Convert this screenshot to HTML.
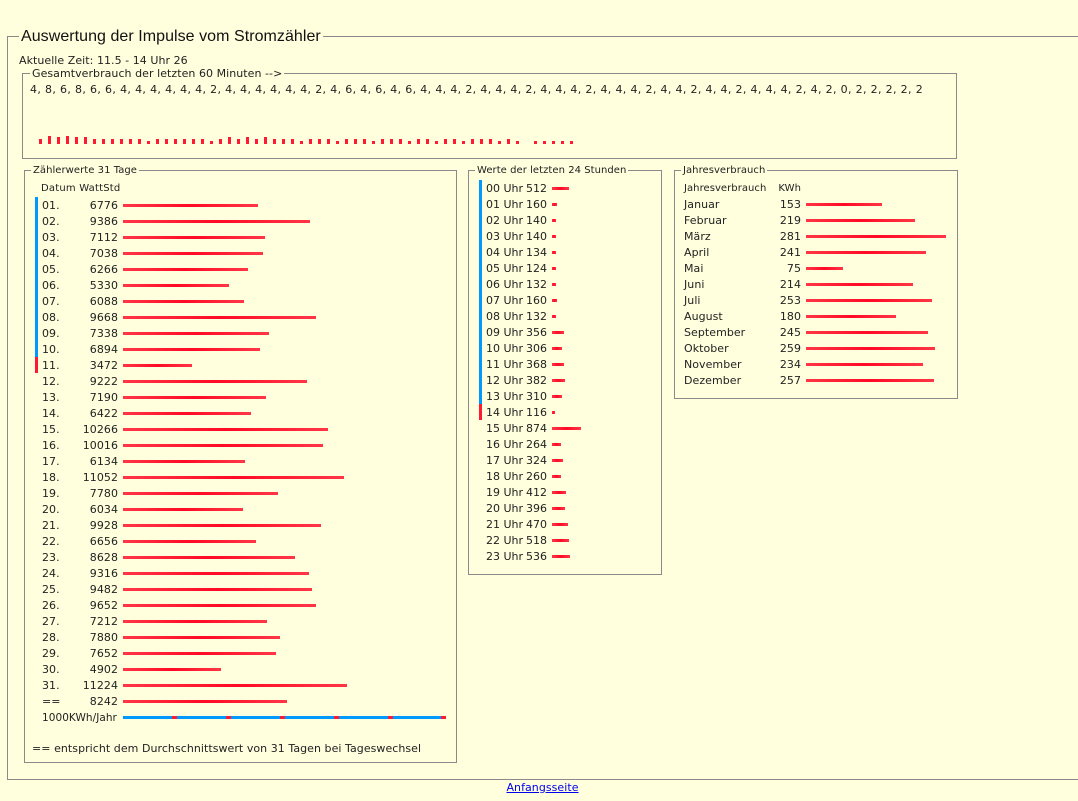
<!DOCTYPE html>
<html><head><meta charset="utf-8">
<style>
body{margin:0;width:1078px;height:801px;background:#ffffdd;font-family:"DejaVu Sans",Verdana,sans-serif;font-size:11px;color:#222;position:relative;overflow:hidden;letter-spacing:0.05px}
.fs{position:absolute;border:1px solid #8a8a8a;box-sizing:border-box}
.lg{position:absolute;background:#ffffdd;padding:0 2px;white-space:nowrap;line-height:14px}
.t{position:absolute;white-space:nowrap;line-height:16px}
.r{position:absolute;height:16px;line-height:16px;white-space:nowrap;left:0;width:1000px}
.r span{position:absolute;top:1px}
.r i{position:absolute;top:7px;height:3px;background:linear-gradient(to right,#ff3546,#ff0a26 50%,#ff3546)}
.d .a{left:42px}.d .b{left:60px;width:58px;text-align:right}.d i{left:123px}
.h .a{left:486px;letter-spacing:0}.h .b{left:515px;width:32px;text-align:right;letter-spacing:0}.h i{left:552px}
.m .a{left:684px}.m .b{left:765px;width:36px;text-align:right}.m i{left:806px}
#bars{position:absolute;left:39px;top:128px;height:16px;display:flex;align-items:flex-end}
#bars b{display:block;width:3px;margin-right:6px;background:#ff1a33}
</style></head><body>

<div class="fs" style="left:7px;top:36px;width:1072px;height:744px"></div>
<div class="lg" style="left:19px;top:28px;font-family:'Liberation Sans',sans-serif;font-size:16px;line-height:18px;color:#111">Auswertung der Impulse vom Stromzähler</div>
<div class="t" style="left:19px;top:53px">Aktuelle Zeit: 11.5 - 14 Uhr 26</div>

<div class="fs" style="left:22px;top:73px;width:935px;height:86px"></div>
<div class="lg" style="left:30px;top:67px">Gesamtverbrauch der letzten 60 Minuten --&gt;</div>
<div class="t" style="left:30px;top:82px;letter-spacing:0.34px">4, 8, 6, 8, 6, 6, 4, 4, 4, 4, 4, 4, 2, 4, 4, 4, 4, 4, 4, 2, 4, 6, 4, 6, 4, 6, 4, 4, 4, 2, 4, 4, 4, 2, 4, 4, 4, 2, 4, 4, 4, 2, 4, 4, 2, 4, 4, 2, 4, 4, 4, 2, 4, 2, 0, 2, 2, 2, 2, 2</div>
<div id="bars">
<b style="height:5px"></b><b style="height:8px"></b><b style="height:7px"></b><b style="height:8px"></b><b style="height:7px"></b><b style="height:7px"></b><b style="height:5px"></b><b style="height:5px"></b><b style="height:5px"></b><b style="height:5px"></b><b style="height:5px"></b><b style="height:5px"></b><b style="height:3px"></b><b style="height:5px"></b><b style="height:5px"></b><b style="height:5px"></b><b style="height:5px"></b><b style="height:5px"></b><b style="height:5px"></b><b style="height:3px"></b><b style="height:5px"></b><b style="height:7px"></b><b style="height:5px"></b><b style="height:7px"></b><b style="height:5px"></b><b style="height:7px"></b><b style="height:5px"></b><b style="height:5px"></b><b style="height:5px"></b><b style="height:3px"></b><b style="height:5px"></b><b style="height:5px"></b><b style="height:5px"></b><b style="height:3px"></b><b style="height:5px"></b><b style="height:5px"></b><b style="height:5px"></b><b style="height:3px"></b><b style="height:5px"></b><b style="height:5px"></b><b style="height:5px"></b><b style="height:3px"></b><b style="height:5px"></b><b style="height:5px"></b><b style="height:3px"></b><b style="height:5px"></b><b style="height:5px"></b><b style="height:3px"></b><b style="height:5px"></b><b style="height:5px"></b><b style="height:5px"></b><b style="height:3px"></b><b style="height:5px"></b><b style="height:3px"></b><b style="height:0px"></b><b style="height:3px"></b><b style="height:3px"></b><b style="height:3px"></b><b style="height:3px"></b><b style="height:3px"></b>
</div>

<!-- 31 Tage -->
<div class="fs" style="left:24px;top:170px;width:433px;height:593px"></div>
<div class="lg" style="left:31px;top:164px;font-size:10px">Zählerwerte 31 Tage</div>
<div class="t" style="left:41px;top:181px;font-size:10px;letter-spacing:0.2px">Datum&nbsp;WattStd</div>
<div style="position:absolute;left:35px;top:197px;width:3px;height:160px;background:#0099ff"></div>
<div style="position:absolute;left:35px;top:357px;width:3px;height:16px;background:#ff1a33"></div>
<div class="r d" style="top:197px"><span class="a">01.</span><span class="b">6776</span><i style="width:135px"></i></div>
<div class="r d" style="top:213px"><span class="a">02.</span><span class="b">9386</span><i style="width:187px"></i></div>
<div class="r d" style="top:229px"><span class="a">03.</span><span class="b">7112</span><i style="width:142px"></i></div>
<div class="r d" style="top:245px"><span class="a">04.</span><span class="b">7038</span><i style="width:140px"></i></div>
<div class="r d" style="top:261px"><span class="a">05.</span><span class="b">6266</span><i style="width:125px"></i></div>
<div class="r d" style="top:277px"><span class="a">06.</span><span class="b">5330</span><i style="width:106px"></i></div>
<div class="r d" style="top:293px"><span class="a">07.</span><span class="b">6088</span><i style="width:121px"></i></div>
<div class="r d" style="top:309px"><span class="a">08.</span><span class="b">9668</span><i style="width:193px"></i></div>
<div class="r d" style="top:325px"><span class="a">09.</span><span class="b">7338</span><i style="width:146px"></i></div>
<div class="r d" style="top:341px"><span class="a">10.</span><span class="b">6894</span><i style="width:137px"></i></div>
<div class="r d" style="top:357px"><span class="a">11.</span><span class="b">3472</span><i style="width:69px"></i></div>
<div class="r d" style="top:373px"><span class="a">12.</span><span class="b">9222</span><i style="width:184px"></i></div>
<div class="r d" style="top:389px"><span class="a">13.</span><span class="b">7190</span><i style="width:143px"></i></div>
<div class="r d" style="top:405px"><span class="a">14.</span><span class="b">6422</span><i style="width:128px"></i></div>
<div class="r d" style="top:421px"><span class="a">15.</span><span class="b">10266</span><i style="width:205px"></i></div>
<div class="r d" style="top:437px"><span class="a">16.</span><span class="b">10016</span><i style="width:200px"></i></div>
<div class="r d" style="top:453px"><span class="a">17.</span><span class="b">6134</span><i style="width:122px"></i></div>
<div class="r d" style="top:469px"><span class="a">18.</span><span class="b">11052</span><i style="width:221px"></i></div>
<div class="r d" style="top:485px"><span class="a">19.</span><span class="b">7780</span><i style="width:155px"></i></div>
<div class="r d" style="top:501px"><span class="a">20.</span><span class="b">6034</span><i style="width:120px"></i></div>
<div class="r d" style="top:517px"><span class="a">21.</span><span class="b">9928</span><i style="width:198px"></i></div>
<div class="r d" style="top:533px"><span class="a">22.</span><span class="b">6656</span><i style="width:133px"></i></div>
<div class="r d" style="top:549px"><span class="a">23.</span><span class="b">8628</span><i style="width:172px"></i></div>
<div class="r d" style="top:565px"><span class="a">24.</span><span class="b">9316</span><i style="width:186px"></i></div>
<div class="r d" style="top:581px"><span class="a">25.</span><span class="b">9482</span><i style="width:189px"></i></div>
<div class="r d" style="top:597px"><span class="a">26.</span><span class="b">9652</span><i style="width:193px"></i></div>
<div class="r d" style="top:613px"><span class="a">27.</span><span class="b">7212</span><i style="width:144px"></i></div>
<div class="r d" style="top:629px"><span class="a">28.</span><span class="b">7880</span><i style="width:157px"></i></div>
<div class="r d" style="top:645px"><span class="a">29.</span><span class="b">7652</span><i style="width:153px"></i></div>
<div class="r d" style="top:661px"><span class="a">30.</span><span class="b">4902</span><i style="width:98px"></i></div>
<div class="r d" style="top:677px"><span class="a">31.</span><span class="b">11224</span><i style="width:224px"></i></div>
<div class="r d" style="top:693px"><span class="a">==</span><span class="b">8242</span><i style="width:164px"></i></div>
<div class="r d" style="top:709px;font-size:10.5px"><span class="a">1000KWh/Jahr</span></div>
<div style="position:absolute;left:123px;top:716px;width:323px;height:3px;background:#0099ff"></div>
<div style="position:absolute;left:172px;top:716px;width:5px;height:3px;background:#ff1a33"></div>
<div style="position:absolute;left:226px;top:716px;width:5px;height:3px;background:#ff1a33"></div>
<div style="position:absolute;left:280px;top:716px;width:5px;height:3px;background:#ff1a33"></div>
<div style="position:absolute;left:334px;top:716px;width:5px;height:3px;background:#ff1a33"></div>
<div style="position:absolute;left:388px;top:716px;width:5px;height:3px;background:#ff1a33"></div>
<div style="position:absolute;left:441px;top:716px;width:5px;height:3px;background:#ff1a33"></div>
<div class="t" style="left:32px;top:741px">== entspricht dem Durchschnittswert von 31 Tagen bei Tageswechsel</div>

<!-- 24 Stunden -->
<div class="fs" style="left:468px;top:170px;width:194px;height:405px"></div>
<div class="lg" style="left:475px;top:164px;font-size:10px">Werte der letzten 24 Stunden</div>
<div style="position:absolute;left:479px;top:180px;width:3px;height:224px;background:#0099ff"></div>
<div style="position:absolute;left:479px;top:404px;width:3px;height:16px;background:#ff1a33"></div>
<div class="r h" style="top:180px"><span class="a">00 Uhr</span><span class="b">512</span><i style="width:17px"></i></div>
<div class="r h" style="top:196px"><span class="a">01 Uhr</span><span class="b">160</span><i style="width:5px"></i></div>
<div class="r h" style="top:212px"><span class="a">02 Uhr</span><span class="b">140</span><i style="width:4px"></i></div>
<div class="r h" style="top:228px"><span class="a">03 Uhr</span><span class="b">140</span><i style="width:4px"></i></div>
<div class="r h" style="top:244px"><span class="a">04 Uhr</span><span class="b">134</span><i style="width:4px"></i></div>
<div class="r h" style="top:260px"><span class="a">05 Uhr</span><span class="b">124</span><i style="width:4px"></i></div>
<div class="r h" style="top:276px"><span class="a">06 Uhr</span><span class="b">132</span><i style="width:4px"></i></div>
<div class="r h" style="top:292px"><span class="a">07 Uhr</span><span class="b">160</span><i style="width:5px"></i></div>
<div class="r h" style="top:308px"><span class="a">08 Uhr</span><span class="b">132</span><i style="width:4px"></i></div>
<div class="r h" style="top:324px"><span class="a">09 Uhr</span><span class="b">356</span><i style="width:12px"></i></div>
<div class="r h" style="top:340px"><span class="a">10 Uhr</span><span class="b">306</span><i style="width:10px"></i></div>
<div class="r h" style="top:356px"><span class="a">11 Uhr</span><span class="b">368</span><i style="width:12px"></i></div>
<div class="r h" style="top:372px"><span class="a">12 Uhr</span><span class="b">382</span><i style="width:13px"></i></div>
<div class="r h" style="top:388px"><span class="a">13 Uhr</span><span class="b">310</span><i style="width:10px"></i></div>
<div class="r h" style="top:404px"><span class="a">14 Uhr</span><span class="b">116</span><i style="width:3px"></i></div>
<div class="r h" style="top:420px"><span class="a">15 Uhr</span><span class="b">874</span><i style="width:29px"></i></div>
<div class="r h" style="top:436px"><span class="a">16 Uhr</span><span class="b">264</span><i style="width:9px"></i></div>
<div class="r h" style="top:452px"><span class="a">17 Uhr</span><span class="b">324</span><i style="width:11px"></i></div>
<div class="r h" style="top:468px"><span class="a">18 Uhr</span><span class="b">260</span><i style="width:9px"></i></div>
<div class="r h" style="top:484px"><span class="a">19 Uhr</span><span class="b">412</span><i style="width:14px"></i></div>
<div class="r h" style="top:500px"><span class="a">20 Uhr</span><span class="b">396</span><i style="width:13px"></i></div>
<div class="r h" style="top:516px"><span class="a">21 Uhr</span><span class="b">470</span><i style="width:16px"></i></div>
<div class="r h" style="top:532px"><span class="a">22 Uhr</span><span class="b">518</span><i style="width:17px"></i></div>
<div class="r h" style="top:548px"><span class="a">23 Uhr</span><span class="b">536</span><i style="width:18px"></i></div>

<!-- Jahresverbrauch -->
<div class="fs" style="left:674px;top:170px;width:284px;height:229px"></div>
<div class="lg" style="left:681px;top:164px;font-size:10px">Jahresverbrauch</div>
<div class="r m" style="top:180px;font-size:10px"><span class="a">Jahresverbrauch</span><span class="b">KWh</span></div>
<div class="r m" style="top:196px"><span class="a">Januar</span><span class="b">153</span><i style="width:76px"></i></div>
<div class="r m" style="top:212px"><span class="a">Februar</span><span class="b">219</span><i style="width:109px"></i></div>
<div class="r m" style="top:228px"><span class="a">März</span><span class="b">281</span><i style="width:140px"></i></div>
<div class="r m" style="top:244px"><span class="a">April</span><span class="b">241</span><i style="width:120px"></i></div>
<div class="r m" style="top:260px"><span class="a">Mai</span><span class="b">75</span><i style="width:37px"></i></div>
<div class="r m" style="top:276px"><span class="a">Juni</span><span class="b">214</span><i style="width:107px"></i></div>
<div class="r m" style="top:292px"><span class="a">Juli</span><span class="b">253</span><i style="width:126px"></i></div>
<div class="r m" style="top:308px"><span class="a">August</span><span class="b">180</span><i style="width:90px"></i></div>
<div class="r m" style="top:324px"><span class="a">September</span><span class="b">245</span><i style="width:122px"></i></div>
<div class="r m" style="top:340px"><span class="a">Oktober</span><span class="b">259</span><i style="width:129px"></i></div>
<div class="r m" style="top:356px"><span class="a">November</span><span class="b">234</span><i style="width:117px"></i></div>
<div class="r m" style="top:372px"><span class="a">Dezember</span><span class="b">257</span><i style="width:128px"></i></div>

<div class="t" style="left:0;width:1085px;text-align:center;top:780px"><a href="#" style="color:#0000ee">Anfangsseite</a></div>
</body></html>
